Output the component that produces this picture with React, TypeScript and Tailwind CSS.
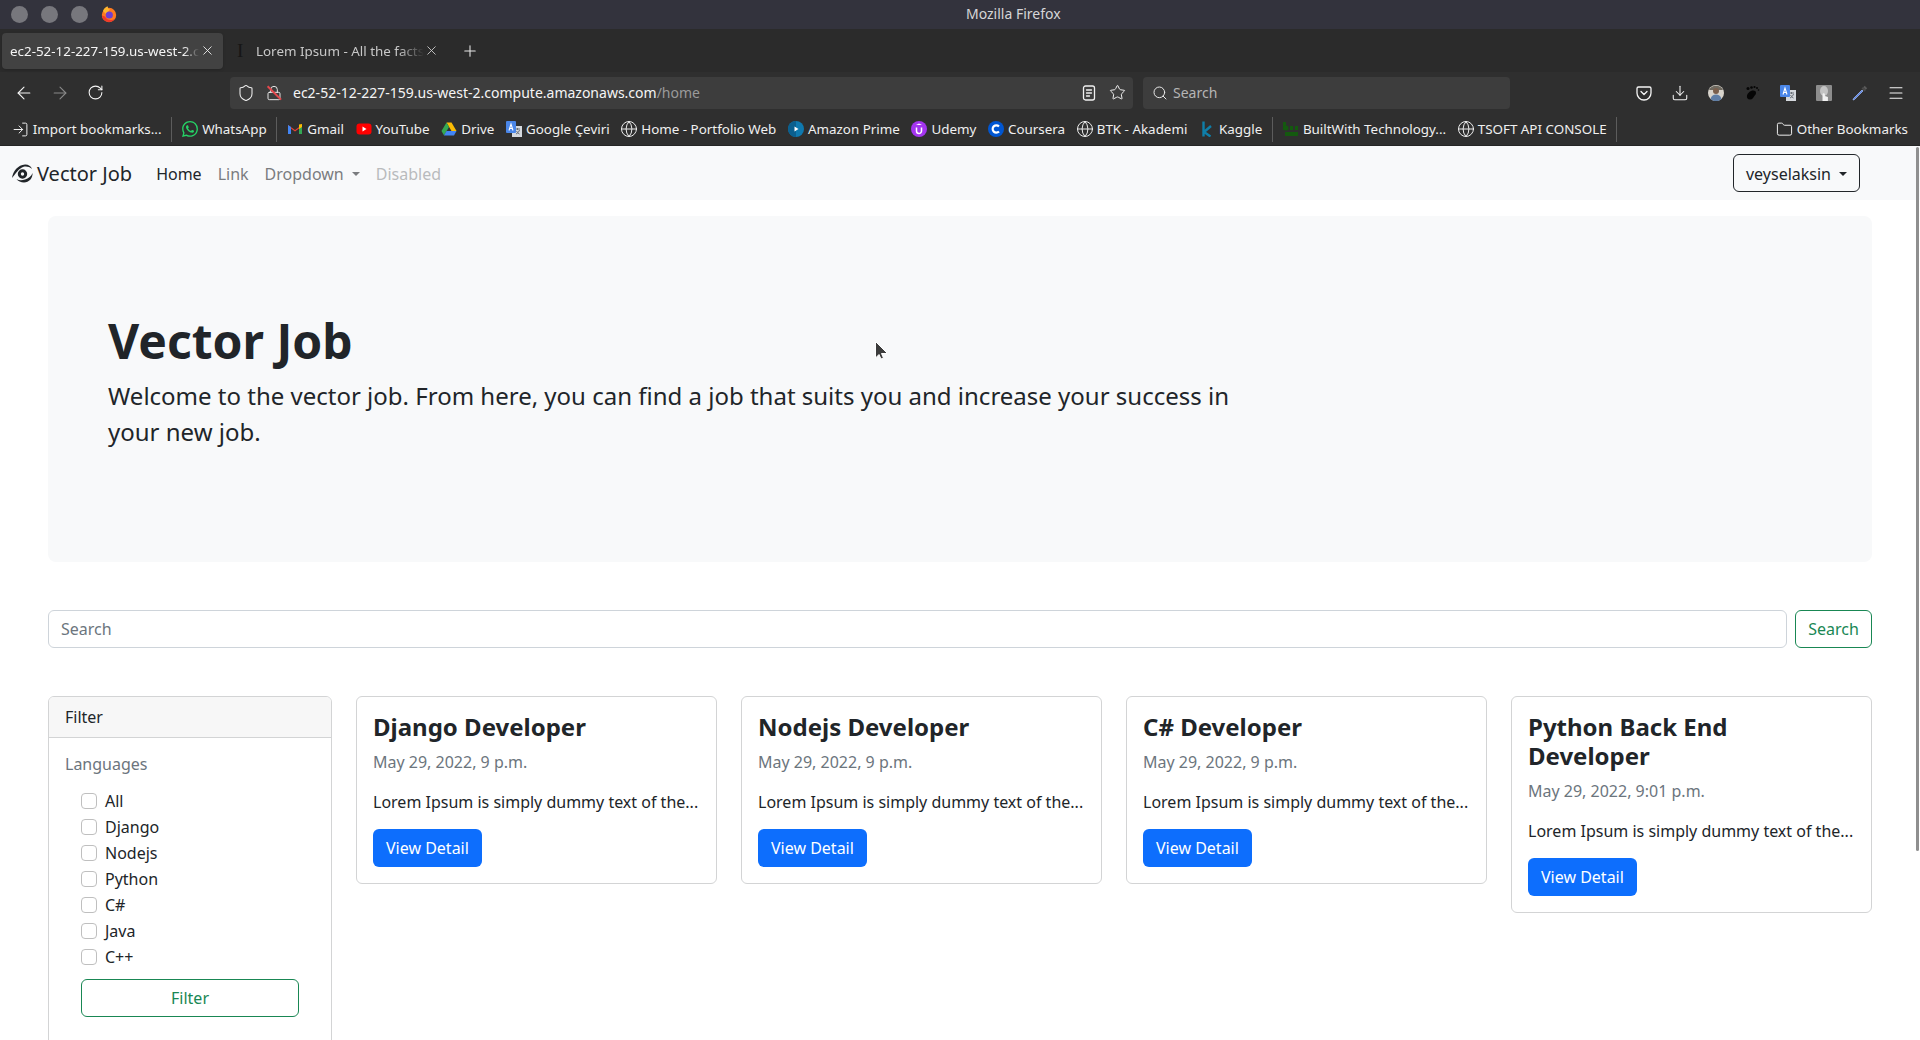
import React from "react";
import { ArrowLeft, ArrowRight, RotateCw, Shield, Lock, Star, Search, Download, Menu, Globe, Folder, Plus, X, LogIn } from "lucide-react";
import { SiWhatsapp } from "react-icons/si";

const GlobeI = () => <Globe size={18} strokeWidth={1.3} className="text-[#f0f0f0] shrink-0" />;

const GmailI = () => (
  <svg width="16" height="16" viewBox="0 0 16 16">
    <path d="M1 13V4l7 5 7-5v9h-3V7.500L8 10.500 4 7.500V13z" fill="#ea4335" />
    <path d="M1 4v9h3V6z" fill="#4285f4" />
    <path d="M15 4v9h-3V6z" fill="#34a853" />
    <path d="M12 3.600 15 3v3l-3 2z" fill="#fbbc04" />
  </svg>
);
const YouTubeI = () => (
  <svg width="16" height="16" viewBox="0 0 16 16">
    <rect x="0.500" y="2.500" width="15" height="11" rx="3" fill="#ff0000" />
    <path d="M6.500 5.500v5l4-2.500z" fill="#fff" />
  </svg>
);
const DriveI = () => (
  <svg width="16" height="16" viewBox="0 0 16 16">
    <path d="M5.500 1.500h5l5 8.500h-5z" fill="#fbbc04" />
    <path d="M5.500 1.500 0.500 10l2.500 4.500L8 6z" fill="#34a853" />
    <path d="M3 14.500h10l2.500-4.500H5.500z" fill="#4285f4" />
  </svg>
);
const TranslateI = () => (
  <svg width="16" height="16" viewBox="0 0 16 16">
    <rect x="6" y="5" width="10" height="11" fill="#d5d9de" />
    <path d="M9 8h5M11.500 7v2M10 13c2-1 3-2.500 3.500-4M10.500 10c.7 1.400 1.600 2.400 3 3" stroke="#6a7078" strokeWidth="1" fill="none" />
    <rect x="0" y="0" width="10" height="12" rx="1" fill="#4a86e8" />
    <path d="M3 9.500 5 3l2 6.500M3.700 7.500h2.600" stroke="#fff" strokeWidth="1.100" fill="none" />
  </svg>
);
const PrimeI = () => (
  <svg width="16" height="16" viewBox="0 0 16 16">
    <circle cx="8" cy="8" r="8" fill="#0f79af" />
    <path d="M0 8a8 8 0 0 0 8 8V0a8 8 0 0 0-8 8z" fill="#0b5f8e" />
    <path d="M6.500 5.500v5L10.500 8z" fill="#fff" />
  </svg>
);
const UdemyI = () => (
  <svg width="16" height="16" viewBox="0 0 16 16">
    <circle cx="8" cy="8" r="8" fill="#a435f0" />
    <path d="M5.500 6.500v3.500a2.500 2.500 0 0 0 5 0V6.500" stroke="#fff" strokeWidth="1.500" fill="none" />
    <path d="M8 2.500l3 1.600H5z" fill="#fff" />
  </svg>
);
const CourseraI = () => (
  <svg width="16" height="16" viewBox="0 0 16 16">
    <circle cx="8" cy="8" r="8" fill="#0056d2" />
    <path d="M11 5.400A3.700 3.700 0 1 0 11 10.600" stroke="#fff" strokeWidth="2.200" fill="none" />
  </svg>
);
const KaggleI = () => (
  <svg width="16" height="16" viewBox="0 0 16 16" fill="none" stroke="#0f7ea8" strokeWidth="2.400">
    <path d="M4.500 0.500V15.500M12 5 5 11l6.500 4.500" />
  </svg>
);
const BuiltWithI = () => (
  <svg width="16" height="16" viewBox="0 0 16 16" fill="#14590f">
    <rect x="0" y="1" width="3" height="8" />
    <circle cx="3" cy="7" r="2.500" />
    <rect x="7" y="5" width="3" height="4" />
    <rect x="12" y="5" width="3" height="4" />
    <rect x="2" y="11" width="13" height="4" />
  </svg>
);
const FirefoxI = () => (
  <svg width="16" height="17" viewBox="0 0 16 17">
    <circle cx="8" cy="9" r="7.200" fill="#ff7a1f" />
    <path d="M2 5C3 2 5 .5 7 .5 6.500 2 7.500 3 9 3.500L5 8z" fill="#ffb52e" />
    <circle cx="8.300" cy="9" r="3.600" fill="#6e3fd1" />
    <path d="M1 9.500a7 7 0 0 0 13 3c-3 2.500-8 2-10-2z" fill="#f0392b" />
  </svg>
);
const BrandI = () => (
  <svg width="22" height="20" viewBox="0 0 22 20">
    <circle cx="10.500" cy="10" r="3.200" fill="none" stroke="#212529" strokeWidth="3" />
    <path d="M0 14C1 7 6 1 13 .5c3-.2 6 1.500 7 4.500-3-2.500-6-3-9-2C7 4.500 4 9 0 14z" fill="#212529" />
    <path d="M20.500 9c.5 5-3.500 9.500-8.500 9.500-3 0-6-1.500-7.500-3.500 2.500 1.500 5.500 1.500 8.500.5 3.500-1 6.500-3.500 7.500-6.500z" fill="#212529" />
  </svg>
);
const PocketI = () => (
  <svg width="16" height="16" viewBox="0 0 16 16" fill="none" stroke="#f5f5f5" strokeWidth="1.300" strokeLinecap="round" strokeLinejoin="round">
    <path d="M2.500 2h11a1.500 1.500 0 0 1 1.500 1.500V8A7 7 0 0 1 1 8V3.500A1.500 1.500 0 0 1 2.500 2z" />
    <path d="M5 6.500 8 9.500l3-3" />
  </svg>
);
const AvatarI = () => (
  <svg width="16" height="16" viewBox="0 0 16 16">
    <circle cx="8" cy="8" r="8" fill="#d8d4cc" />
    <path d="M1 5a8 8 0 0 1 14 0z" fill="#6f6a60" />
    <circle cx="8" cy="6" r="3" fill="#7a5f4c" />
    <path d="M2.500 14c1-3.500 3-4.500 5.500-4.500s4.500 1 5.500 4.500a8 8 0 0 1-11 0z" fill="#5f7ea6" />
  </svg>
);
const FootI = () => (
  <svg width="16" height="16" viewBox="0 0 16 16" fill="#050505">
    <path d="M7 6c2.500-1 5-.5 5 2 0 1.800-1 2-2 3.500-.8 1.300-1.500 3-4 3-2.500 0-3.500-2-3-4C3.500 8.500 5 7 7 6z" />
    <circle cx="4" cy="3.500" r="1.500" />
    <circle cx="7.500" cy="2.500" r="1.300" />
    <circle cx="10.500" cy="2" r="1.100" />
    <circle cx="13" cy="3" r="1" />
    <circle cx="14.500" cy="5" r=".8" />
  </svg>
);
const HandI = () => (
  <svg width="16" height="16" viewBox="0 0 16 16">
    <rect width="16" height="16" rx="1" fill="#8d8d8d" />
    <ellipse cx="8" cy="6" rx="4" ry="5" fill="#c4c4c4" />
    <path d="M6.500 16V9.500a1.200 1.200 0 0 1 2.400 0V11l3 1v4z" fill="#f2f2f2" />
  </svg>
);
const DropperI = () => (
  <svg width="16" height="16" viewBox="0 0 16 16">
    <path d="M10 5 1.500 13.500 1 15l1.500-.5L11 6z" fill="#5b82e0" stroke="#9ab4ee" strokeWidth="0.800" />
    <path d="M9.500 3.500 12.500 6.500 14 5l-3-3z" fill="#4a4a4a" />
    <path d="M12 1.500 14.500 4" stroke="#5a5a5a" strokeWidth="2" />
  </svg>
);
const ReaderI = () => (
  <svg width="16" height="16" viewBox="0 0 16 16" fill="none" stroke="#f0f0f0" strokeWidth="1.300" strokeLinecap="round">
    <rect x="2.500" y="1" width="11" height="14" rx="2" />
    <path d="M5.500 5h5M5.500 8h5M5.500 11h3" />
  </svg>
);

const bookmarks: { icon: React.ReactNode; label: string; sepAfter?: boolean }[] = [
  { icon: <LogIn size={17} strokeWidth={1.4} className="text-[#f0f0f0] shrink-0" />, label: "Import bookmarks...", sepAfter: true },
  { icon: <SiWhatsapp size={16} className="text-[#25d366]" />, label: "WhatsApp", sepAfter: true },
  { icon: <GmailI />, label: "Gmail" },
  { icon: <YouTubeI />, label: "YouTube" },
  { icon: <DriveI />, label: "Drive" },
  { icon: <TranslateI />, label: "Google Çeviri" },
  { icon: <GlobeI />, label: "Home - Portfolio Web" },
  { icon: <PrimeI />, label: "Amazon Prime" },
  { icon: <UdemyI />, label: "Udemy" },
  { icon: <CourseraI />, label: "Coursera" },
  { icon: <GlobeI />, label: "BTK - Akademi" },
  { icon: <KaggleI />, label: "Kaggle", sepAfter: true },
  { icon: <BuiltWithI />, label: "BuiltWith Technology..." },
  { icon: <GlobeI />, label: "TSOFT API CONSOLE", sepAfter: true },
];

const Bookmark = ({ icon, label }: { icon: React.ReactNode; label: string }) => (
  <div className="flex items-center gap-[4px] px-[5.8px] shrink-0">
    <span className="flex w-4 h-4 items-center justify-center">{icon}</span>
    <span className="text-[13.4px] leading-4 text-[#f0f0f0] whitespace-nowrap">{label}</span>
  </div>
);

const Chrome = () => (
  <div className="shrink-0">
    <div className="relative h-[29px] bg-[#33333d] flex items-center pl-[11px]">
      <div className="flex gap-[13px] items-center">
        <span className="w-[17px] h-[17px] rounded-full bg-[#77777d]" />
        <span className="w-[17px] h-[17px] rounded-full bg-[#77777d]" />
        <span className="w-[17px] h-[17px] rounded-full bg-[#77777d]" />
      </div>
      <span className="ml-[13px]"><FirefoxI /></span>
      <span className="absolute left-[966px] top-[4px] text-[14px] leading-[19px] text-[#d6d6d8]">Mozilla Firefox</span>
    </div>
    <div className="h-[43px] bg-[#2b2b2b] flex items-center pl-[2px]">
      <div className="w-[221px] h-[36px] bg-[#424242] rounded-[4px] flex items-center pl-[8px] pr-[8px] shadow-sm">
        <span className="flex-1 overflow-hidden whitespace-nowrap text-[13.4px] pt-[2px] text-[#f5f5f5] [mask-image:linear-gradient(to_right,black_92%,transparent)]">ec2-52-12-227-159.us-west-2.compute.amazonaws.com</span>
        <X size={15} strokeWidth={1.4} className="text-[#f0f0f0] shrink-0 ml-[1px]" />
      </div>
      <div className="w-[226px] h-[36px] flex items-center pl-[14px] pr-[10px]">
        <span className="text-[#161616] text-[19px] leading-[19px] font-['Liberation_Serif',serif] mr-[11px] w-[8px]">I</span>
        <span className="flex-1 overflow-hidden whitespace-nowrap text-[13.4px] pt-[2px] text-[#c8c8c8] [mask-image:linear-gradient(to_right,black_85%,transparent)]">Lorem Ipsum - All the facts - Lipsum generator</span>
        <X size={15} strokeWidth={1.4} className="text-[#d0d0d0] shrink-0" />
      </div>
      <Plus size={18} strokeWidth={1.4} className="text-[#e8e8e8] ml-[12px] mt-[1px]" />
    </div>
    <div className="h-[41px] bg-[#2f2f2f] flex items-center">
      <div className="flex items-center w-[230px] pl-[14px] gap-[16px]">
        <ArrowLeft size={20} strokeWidth={1.3} className="text-[#f5f5f5]" />
        <ArrowRight size={20} strokeWidth={1.3} className="text-[#8a8a8a]" />
        <RotateCw size={17} strokeWidth={1.5} className="text-[#f5f5f5] ml-[1px]" />
      </div>
      <div className="w-[903px] h-[32px] bg-[#3d3d3d] rounded-[4px] flex items-center pl-[7px] pr-[7px]">
        <Shield size={18} strokeWidth={1.4} className="text-[#f0f0f0]" />
        <span className="relative ml-[11px] w-4 h-4 flex items-center justify-center">
          <Lock size={16} strokeWidth={1.4} className="text-[#f0f0f0]" />
          <span className="absolute left-[-1px] top-[7px] w-[19px] h-[1.5px] bg-[#e5484d] rotate-45" />
        </span>
        <span className="ml-[11px] flex-1 text-[14px] leading-5 text-[#f5f5f5] whitespace-nowrap">
          ec2-52-12-227-159.us-west-2.compute.amazonaws.com<span className="text-[#9a9a9a]">/home</span>
        </span>
        <ReaderI />
        <Star size={17} strokeWidth={1.4} className="text-[#f0f0f0] ml-[12px]" />
      </div>
      <div className="ml-[10px] w-[367px] h-[32px] bg-[#3d3d3d] rounded-[4px] flex items-center pl-[9px] gap-[5px]">
        <Search size={16} strokeWidth={1.5} className="text-[#e8e8e8]" />
        <span className="text-[14px] text-[#b5b5b5]">Search</span>
      </div>
      <div className="ml-[126px] flex items-center gap-[20px]">
        <PocketI />
        <Download size={18} strokeWidth={1.4} className="text-[#f5f5f5] -mx-[1px]" />
        <AvatarI />
        <FootI />
        <TranslateI />
        <HandI />
        <DropperI />
        <Menu size={18} strokeWidth={1.4} className="text-[#f5f5f5] -mx-[1px]" />
      </div>
    </div>
    <div className="h-[33px] bg-[#2f2f2f] border-b border-[#252525] flex items-center pl-[7px] pr-[12px]">
      {bookmarks.map((b) => (
        <React.Fragment key={b.label}>
          <Bookmark icon={b.icon} label={b.label} />
          {b.sepAfter && <span className="w-px h-[25px] bg-[#5c5c5c] mx-[4px] shrink-0" />}
        </React.Fragment>
      ))}
      <div className="ml-auto flex items-center gap-[4px]">
        <Folder size={17} strokeWidth={1.4} className="text-[#f0f0f0]" />
        <span className="text-[13.4px] leading-4 text-[#f0f0f0] whitespace-nowrap">Other Bookmarks</span>
      </div>
    </div>
  </div>
);

const Caret = ({ className }: { className: string }) => (
  <span className={"inline-block w-0 h-0 border-x-[4.8px] border-x-transparent border-t-[4.8px] " + className} />
);

const Navbar = () => (
  <nav className="h-[54px] bg-[#f8f9fa] flex items-center px-[12px] shrink-0">
    <div className="flex items-center gap-[3px] mr-[16px] pt-[1px]">
      <BrandI />
      <span className="text-[20px] leading-[30px] text-[#212529]">Vector Job</span>
    </div>
    <div className="flex items-center text-[16px] leading-6 pt-[1px]">
      <span className="px-[8px] text-[#212529]">Home</span>
      <span className="px-[8px] text-[#7a7c7f]">Link</span>
      <span className="px-[8px] text-[#7a7c7f] flex items-center gap-[8px]">
        Dropdown
        <Caret className="border-t-[#7a7c7f]" />
      </span>
      <span className="px-[8px] text-[#b9bbbd]">Disabled</span>
    </div>
    <button className="ml-auto mr-[48px] h-[38px] px-[12px] pt-[1px] flex items-center gap-[8px] border border-[#212529] rounded-[6px] text-[16px] text-[#212529]">
      veyselaksin
      <Caret className="border-t-[#212529]" />
    </button>
  </nav>
);

const jobs = [
  { title: "Django Developer", date: "May 29, 2022, 9 p.m." },
  { title: "Nodejs Developer", date: "May 29, 2022, 9 p.m." },
  { title: "C# Developer", date: "May 29, 2022, 9 p.m." },
  { title: "Python Back End Developer", date: "May 29, 2022, 9:01 p.m." },
];

const JobCard = ({ title, date }: { title: string; date: string }) => (
  <div className="border border-[#d3d4d5] rounded-[6px] p-[16px] bg-white">
    <h5 className="text-[24px] leading-[28.8px] font-bold text-[#212529] mb-[8px] pr-[60px]">{title}</h5>
    <div className="text-[16px] leading-6 text-[#6c757d] mb-[16px]">{date}</div>
    <p className="text-[16px] leading-6 text-[#212529] mb-[15px] whitespace-nowrap">Lorem Ipsum is simply dummy text of the...</p>
    <button className="block h-[38px] px-[13px] rounded-[6px] bg-[#0d6efd] text-white text-[16px]">View Detail</button>
  </div>
);

const languages = ["All", "Django", "Nodejs", "Python", "C#", "Java", "C++"];

const Sidebar = () => (
  <aside className="w-[284px] shrink-0 border border-[#d3d4d5] rounded-[6px] bg-white">
    <div className="h-[41px] bg-[#f7f7f7] border-b border-[#d3d4d5] rounded-t-[5px] px-[16px] flex items-center text-[16px] text-[#212529]">Filter</div>
    <div className="px-[16px] pt-[14px] pb-[40px]">
      <div className="text-[16px] leading-6 text-[#6c757d] mb-[12px]">Languages</div>
      <div className="pl-[16px] pr-[16px]">
        {languages.map((l) => (
          <label key={l} className="flex items-center h-[26px] text-[16px] text-[#212529]">
            <span className="w-4 h-4 rounded-[4px] border border-[#bfbfbf] bg-white mr-[8px]" />
            {l}
          </label>
        ))}
        <button className="mt-[9px] w-full h-[38px] rounded-[6px] border border-[#198754] text-[#198754] text-[16px]">Filter</button>
      </div>
    </div>
  </aside>
);

const Page = () => (
  <main className="flex-1 min-h-0 bg-white px-[48px] pt-[16px]">
    <section className="h-[346px] rounded-[8px] bg-[#f8f9fa] px-[60px] py-[96px] mb-[48px]">
      <h1 className="text-[48px] leading-[57.6px] font-bold text-[#212529] mb-[8px]">Vector Job</h1>
      <p className="text-[24px] leading-9 text-[#212529] w-[1130px]">Welcome to the vector job. From here, you can find a job that suits you and increase your success in your new job.</p>
    </section>
    <div className="flex gap-[8px] mb-[48px]">
      <div className="flex-1 h-[38px] border border-[#ced4da] rounded-[6px] px-[12px] flex items-center text-[16px] text-[#6c757d]">Search</div>
      <button className="h-[38px] w-[77px] border border-[#198754] rounded-[6px] text-[#198754] text-[16px]">Search</button>
    </div>
    <div className="flex gap-[24px] items-start">
      <Sidebar />
      <div className="flex-1 grid grid-cols-4 gap-[24px] items-start">
        {jobs.map((j) => (
          <JobCard key={j.title} {...j} />
        ))}
      </div>
    </div>
  </main>
);

export default function App() {
  return (
    <div className="relative h-[1040px] overflow-hidden flex flex-col bg-white font-['Noto_Sans',sans-serif]">
      <Chrome />
      <Navbar />
      <Page />
      <span className="absolute right-[1px] top-[147px] w-[3px] h-[704px] bg-[#8f8f8f] rounded-full" />
      <svg className="absolute left-[874px] top-[340px]" width="15" height="22" viewBox="0 0 15 22">
        <path d="M1.500 1.500V18l3.500-3.500 2 4.500 2.500-1-2-4.500H13.500z" fill="#3c3c3c" stroke="#ffffff" strokeWidth="1" />
      </svg>
    </div>
  );
}
